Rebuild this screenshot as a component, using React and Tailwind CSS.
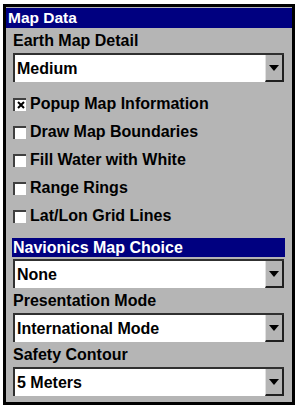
import React from "react";

const font = { fontFamily: '"Liberation Sans", Arial, sans-serif' };

function Arrow() {
  return (
    <svg width="10" height="6" viewBox="0 0 10 6">
      <polygon points="0,0 10,0 5,6" fill="#000" />
    </svg>
  );
}

function Dropdown({ value }) {
  return (
    <div className="flex h-[29px] border-t-2 border-l-2 border-t-[#303030] border-l-[#303030] bg-white">
      <div className="flex-1 flex items-center pl-[2px] text-[16px] font-bold text-black leading-none">
        {value}
      </div>
      <div className="w-[19px] bg-[#b5b5b5] border-l border-l-[#e0e0e0] border-r-2 border-b-2 border-r-[#202020] border-b-[#202020] flex items-center justify-center">
        <Arrow />
      </div>
    </div>
  );
}

function Label({ children }) {
  return (
    <div className="h-[25px] flex items-center text-[16px] font-bold text-black leading-none">
      {children}
    </div>
  );
}

function Check({ label, checked }) {
  return (
    <div className="h-[28px] flex items-center gap-[4px]">
      <div className="w-[13px] h-[13px] bg-white border-t-2 border-l-2 border-t-[#404040] border-l-[#404040] flex items-center justify-center">
        {checked && (
          <svg width="8" height="8" viewBox="0 0 8 8">
            <path d="M1 1 L7 7 M7 1 L1 7" stroke="#000" strokeWidth="2" />
          </svg>
        )}
      </div>
      <span className="text-[16px] font-bold text-black leading-none">{label}</span>
    </div>
  );
}

export default function App() {
  return (
    <div className="w-[299px] h-[409px] bg-white pt-[4px] pl-[3px] pr-[4px] pb-[4px]" style={font}>
      <div className="h-full border-[3px] border-black bg-[#b5b5b5] pt-[1px] flex flex-col">
        <div className="h-[20px] bg-[#000080] text-white text-[15.5px] font-bold leading-[20px] pl-[2px]">
          Map Data
        </div>
        <div className="pl-[7px] pr-[8px] flex flex-col">
          <Label>Earth Map Detail</Label>
          <Dropdown value="Medium" />
          <div className="mt-[8px] flex flex-col">
            <Check label="Popup Map Information" checked />
            <Check label="Draw Map Boundaries" />
            <Check label="Fill Water with White" />
            <Check label="Range Rings" />
            <Check label="Lat/Lon Grid Lines" />
          </div>
          <div className="mt-[8px] -ml-[1px] -mr-[1px] h-[19px] bg-[#000080] text-white text-[16px] font-bold leading-[19px] pl-[1px]">
            Navionics Map Choice
          </div>
          <div className="mt-[2px]">
            <Dropdown value="None" />
          </div>
          <Label>Presentation Mode</Label>
          <Dropdown value="International Mode" />
          <Label>Safety Contour</Label>
          <Dropdown value="5 Meters" />
        </div>
      </div>
    </div>
  );
}
